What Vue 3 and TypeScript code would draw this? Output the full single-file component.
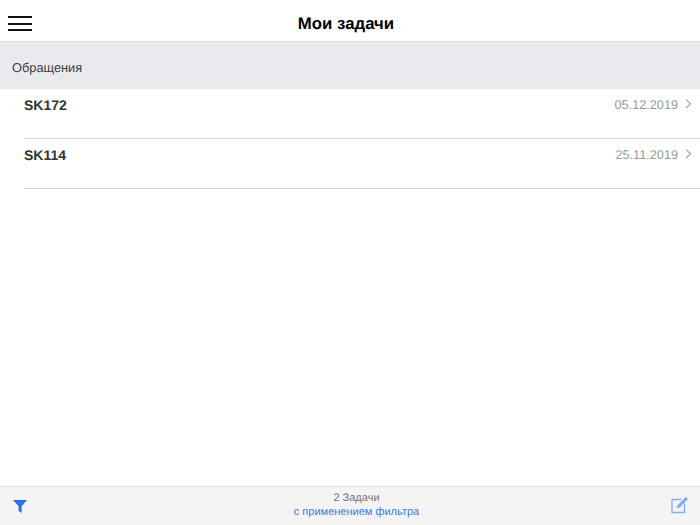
<script setup lang="ts">
interface Task {
  code: string;
  date: string;
}
const tasks: Task[] = [
  { code: "SK172", date: "05.12.2019" },
  { code: "SK114", date: "25.11.2019" },
];
</script>

<template>
  <div class="page">
    <header class="top">
      <button class="menu" aria-label="Меню">
        <span></span><span></span><span></span>
      </button>
      <h1>Мои задачи</h1>
    </header>
    <div class="section">Обращения</div>
    <ul class="list">
      <li v-for="t in tasks" :key="t.code" class="row">
        <span class="code">{{ t.code }}</span>
        <span class="date">{{ t.date }}</span>
        <svg class="chev" width="7" height="11" viewBox="0 0 7 11">
          <path d="M1 .6l4.6 4.2L1 9" fill="none" stroke="#a0a0a0" stroke-width="1.1" />
        </svg>
      </li>
    </ul>
    <footer class="bottom">
      <svg class="filter" width="14" height="13" viewBox="0 0 14 13">
        <path d="M0 0h14L8.6 6.2V13L5.6 11V6.2z" fill="#2f6bf0" />
      </svg>
      <div class="status">
        <div class="count">2 Задачи</div>
        <div class="applied">с применением фильтра</div>
      </div>
      <svg class="edit" width="18" height="18" viewBox="0 0 18 18">
        <path d="M10.5 3.5H1v13h12.5V7.5" fill="none" stroke="#8aa9f5" stroke-width="1.3" />
        <path d="M5.5 12.5l1-3.2L14.8.8l2.2 2.2-8.4 8.5z" fill="#86a6f5" />
      </svg>
    </footer>
  </div>
</template>

<style>
html, body { margin: 0; background: #fff; }
</style>

<style scoped>
.page {
  width: 700px;
  height: 525px;
  display: flex;
  flex-direction: column;
  font-family: "Liberation Sans", Arial, sans-serif;
  text-rendering: geometricPrecision;
  background: #fff;
  overflow: hidden;
}
.top {
  height: 41px;
  flex: none;
  display: flex;
  align-items: center;
  justify-content: center;
  position: relative;
  border-bottom: 1px solid #dcdcde;
}
.top h1 {
  margin: 6px 8px 0 0;
  font-size: 16.8px;
  font-weight: 700;
  color: #000;
}
.menu {
  position: absolute;
  left: 8px;
  top: 16px;
  width: 24px;
  padding: 0;
  border: 0;
  background: none;
  display: flex;
  flex-direction: column;
  gap: 4.5px;
}
.menu span { height: 2px; background: #111; }
.section {
  height: 47px;
  flex: none;
  display: flex;
  align-items: center;
  padding-left: 12px;
  background: #e9eaee;
  color: #3c3c3c;
  font-size: 12.8px;
  box-sizing: border-box;
  padding-top: 3px;
}
.list { list-style: none; margin: 0; padding: 0; flex: 1; }
.row {
  height: 50px;
  margin-left: 24px;
  padding-right: 8px;
  box-sizing: border-box;
  display: flex;
  align-items: flex-start;
  border-bottom: 1px solid #d8d8d8;
  padding-top: 8px;
}
.code { font-size: 14px; font-weight: 700; color: #333; flex: 1; }
.date { font-size: 12.7px; color: #999; margin-top: 1px; }
.chev { margin: 2px 0 0 7px; }
.bottom {
  height: 38px;
  flex: none;
  display: flex;
  align-items: center;
  justify-content: space-between;
  padding: 0 11px 0 13px;
  background: #f4f4f4;
  border-top: 1px solid #e3e3e3;
}
.status {
  text-align: center;
  font-size: 11px;
  line-height: 14px;
  margin: -2px 0 0 15px;
}
.edit { margin-top: -2px; }
.count { color: #777; }
.applied { color: #3f76e8; }
</style>
